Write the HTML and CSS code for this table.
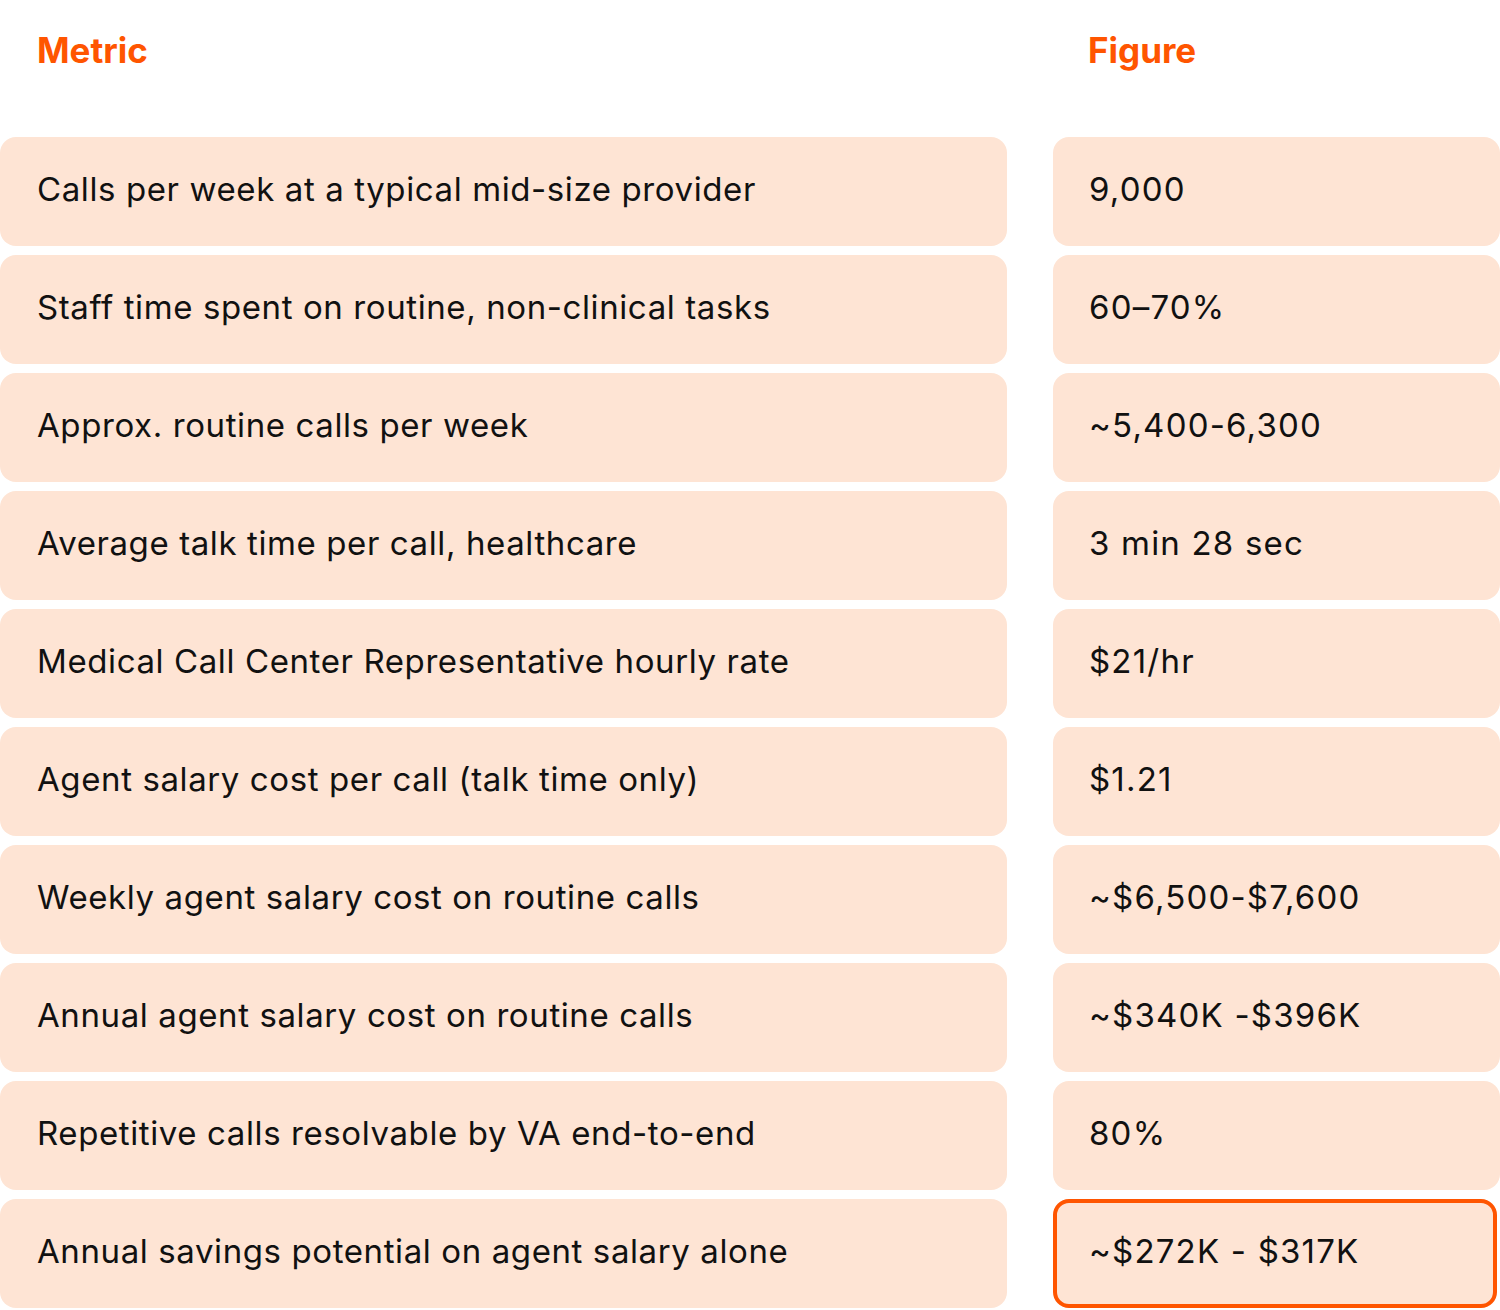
FILE: index.html
```html
<!DOCTYPE html>
<html lang="en">
<head>
<meta charset="utf-8">
<title>Metric table</title>
<link rel="stylesheet" href="styles.css">
</head>
<body>
<div class="table">
  <div class="head">Metric</div>
  <div class="head">Figure</div>

  <div class="cell">Calls per week at a typical mid-size provider</div>
  <div class="cell">9,000</div>

  <div class="cell">Staff time spent on routine, non-clinical tasks</div>
  <div class="cell">60–70%</div>

  <div class="cell">Approx. routine calls per week</div>
  <div class="cell">~5,400-6,300</div>

  <div class="cell">Average talk time per call, healthcare</div>
  <div class="cell">3 min 28 sec</div>

  <div class="cell">Medical Call Center Representative hourly rate</div>
  <div class="cell">$21/hr</div>

  <div class="cell">Agent salary cost per call (talk time only)</div>
  <div class="cell">$1.21</div>

  <div class="cell">Weekly agent salary cost on routine calls</div>
  <div class="cell">~$6,500-$7,600</div>

  <div class="cell">Annual agent salary cost on routine calls</div>
  <div class="cell">~$340K -$396K</div>

  <div class="cell">Repetitive calls resolvable by VA end-to-end</div>
  <div class="cell">80%</div>

  <div class="cell">Annual savings potential on agent salary alone</div>
  <div class="cell highlight">~$272K - $317K</div>
</div>
</body>
</html>
```

FILE: styles.css
```css
html, body {
  margin: 0;
  padding: 0;
  background: #ffffff;
}

body {
  font-family: Inter, "Noto Sans", "Liberation Sans", sans-serif;
  color: #111111;
  width: 1500px;
}

.table {
  display: grid;
  grid-template-columns: 1007px 1fr;
  grid-template-rows: 128px;
  grid-auto-rows: 109px;
  column-gap: 46px;
  row-gap: 9px;
}

.head {
  padding: 29px 0 0 37px;
  box-sizing: border-box;
  font-size: 35px;
  font-weight: 700;
  color: #ff5500;
  line-height: 42px;
}

.table > .head:nth-child(2) {
  padding-left: 35px;
}

.cell {
  background: #fee4d4;
  border-radius: 16px;
  display: flex;
  align-items: center;
  padding: 0 0 6px 37px;
  box-sizing: border-box;
  font-size: 33px;
  letter-spacing: 0.6px;
}

.cell:nth-child(even) {
  padding-left: 36px;
  letter-spacing: 1.2px;
}

.highlight {
  border: 4px solid #ff5500;
  margin-right: 3px;
  padding-left: 32px !important;
}
```
